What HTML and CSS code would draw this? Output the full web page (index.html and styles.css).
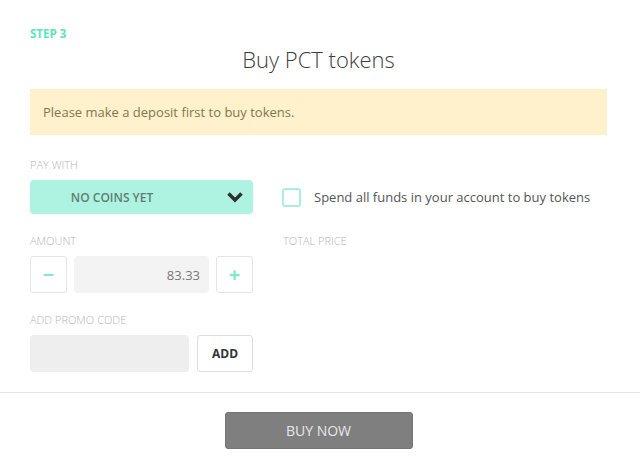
FILE: index.html
```html
<!DOCTYPE html>
<html lang="en">

<head>
    <meta charset="UTF-8">
    <meta name="viewport" content="width=device-width, initial-scale=1.0">
    <title>Buy PCT tokens</title>
    <link rel="stylesheet" href="styles.css">
</head>

<body>
    <div class="panel">
        <div class="step">STEP 3</div>
        <h1 class="title">Buy PCT tokens</h1>
        <div class="alert">Please make a deposit first to buy tokens.</div>

        <div class="form">
            <div class="field">
                <label class="label">PAY WITH</label>
                <div class="select">
                    <span class="select-text">NO COINS YET</span>
                    <svg class="chevron" width="18" height="12" viewBox="0 0 18 12">
                        <polyline points="2.5,2.5 9,9 15.5,2.5" fill="none" stroke="#2f2f2f" stroke-width="3.5" />
                    </svg>
                </div>
            </div>
            <div class="field field-check">
                <label class="check">
                    <span class="box"></span>
                    <span>Spend all funds in your account to buy tokens</span>
                </label>
            </div>

            <div class="field">
                <label class="label">AMOUNT</label>
                <div class="stepper">
                    <button class="step-btn">&minus;</button>
                    <input class="amount" type="text" value="83.33">
                    <button class="step-btn">+</button>
                </div>
            </div>
            <div class="field">
                <label class="label">TOTAL PRICE</label>
            </div>

            <div class="field">
                <label class="label">ADD PROMO CODE</label>
                <div class="promo">
                    <input class="promo-input" type="text">
                    <button class="add-btn">ADD</button>
                </div>
            </div>
        </div>
    </div>

    <div class="footer">
        <button class="buy">BUY NOW</button>
    </div>
</body>

</html>
```

FILE: styles.css
```css
body {
    margin: 0;
    padding: 0;
    background: #fff;
    font-family: "Open Sans", "Noto Sans", sans-serif;
    color: #555;
}

.panel {
    padding: 27px 33px 20px 30px;
}

.step {
    font-size: 11.5px;
    line-height: 14px;
    font-weight: 700;
    color: #5ee3b9;
}

.title {
    margin: 4px 0 16px;
    font-size: 22px;
    line-height: 28px;
    font-weight: 300;
    color: #3c3c3c;
    text-align: center;
}

.alert {
    background: #fef1cb;
    padding: 14px 13px;
    font-size: 13px;
    line-height: 18px;
    color: #85754f;
    margin-bottom: 23px;
}

.form {
    display: grid;
    grid-template-columns: 223px 1fr;
    column-gap: 30px;
    row-gap: 20px;
}

.label {
    display: block;
    font-size: 11px;
    line-height: 14px;
    font-weight: 300;
    color: #b5b5b5;
    margin-bottom: 8px;
}

.field-check {
    display: flex;
    align-items: flex-end;
}

.select {
    display: flex;
    align-items: center;
    height: 34px;
    background: #aef3e1;
    border-radius: 4px;
}

.select-text {
    flex: 1;
    text-align: center;
    font-size: 12px;
    font-weight: 600;
    color: #5f7d74;
}

.chevron {
    margin: 0 9px 0 32px;
}

.check {
    display: flex;
    align-items: center;
    height: 34px;
    font-size: 13px;
    color: #555;
}

.box {
    width: 15px;
    height: 15px;
    border: 2px solid #a9f0dc;
    border-radius: 3px;
    margin: 0 13px 0 -1px;
}

.stepper {
    display: grid;
    grid-template-columns: 37px 1fr 37px;
    gap: 7px;
    height: 37px;
}

button {
    font-family: inherit;
    cursor: pointer;
}

.step-btn {
    background: #fff;
    border: 1px solid #e5e5e5;
    border-radius: 3px;
    font-size: 20px;
    font-weight: 700;
    color: #7fe9cb;
    padding: 0;
}

.amount {
    min-width: 0;
    border: none;
    border-radius: 4px;
    background: #f3f3f3;
    text-align: right;
    padding: 0 9px 0 0;
    font-family: inherit;
    font-size: 13px;
    color: #777;
}

.promo {
    display: flex;
    gap: 8px;
    height: 37px;
}

.promo-input {
    width: 159px;
    border: none;
    border-radius: 4px;
    background: #eee;
    padding: 0;
}

.add-btn {
    width: 56px;
    background: #fff;
    border: 1px solid #dedede;
    border-radius: 3px;
    font-size: 12px;
    font-weight: 700;
    color: #333;
    padding: 0;
}

.footer {
    border-top: 1px solid #e5e5e5;
    padding: 19px 33px 0 30px;
    display: flex;
    justify-content: center;
}

.buy {
    width: 188px;
    height: 37px;
    background: #7f7f7f;
    border: 1px solid #757575;
    border-radius: 3px;
    font-size: 14px;
    color: #e8e8e8;
}
```
